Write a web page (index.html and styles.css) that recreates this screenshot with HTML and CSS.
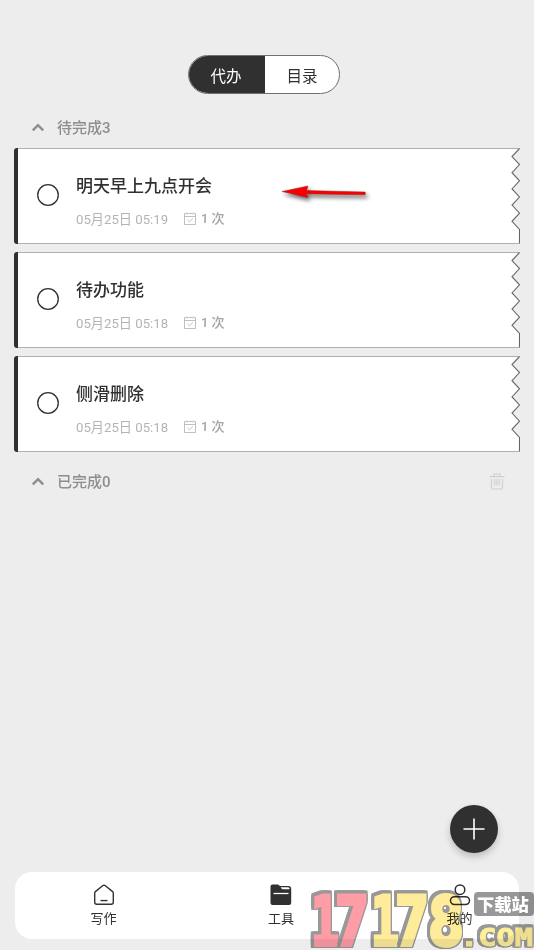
FILE: index.html
```html
<!DOCTYPE html>
<html lang="zh-CN">
<head>
<meta charset="utf-8">
<title>代办</title>
<link rel="stylesheet" href="styles.css">
</head>
<body>
<svg class="defs" width="0" height="0">
  <symbol id="edge" viewBox="0 0 506 97">
    <path d="M3 .5H505.500L498 8.500L505.500 16.600L498 24.700L505.500 32.800L498 40.900L505.500 49L498 57.100L505.500 65.200L498 73.300L505.500 81.400V95.500H3Z" fill="#fff"/>
    <path d="M3 .5H505.500M505.500 95.500H3" fill="none" stroke="#b0b0b0"/>
    <path d="M505.500 .5L498 8.500L505.500 16.600L498 24.700L505.500 32.800L498 40.900L505.500 49L498 57.100L505.500 65.200L498 73.300L505.500 81.400V95.500" fill="none" stroke="#666" stroke-width="1.100"/>
    <path d="M4 0H3Q0 0 0 3V93Q0 96 3 96H4Z" fill="#303030"/>
  </symbol>
  <symbol id="ring" viewBox="0 0 22 22"><circle cx="11" cy="11" r="10.300" fill="none" stroke="#303030" stroke-width="1.300"/></symbol>
  <symbol id="cal" viewBox="0 0 12 13">
    <path d="M2.500 1.500H.5V12.500H11.500V1.500H9.500M4 1.500H8M3 .3V2.500M9 .3V2.500M.5 4.500H11.500M3.500 8L5.500 9.800L8.800 6.600" fill="none" stroke="#b8b8b8" stroke-width=".9"/>
  </symbol>
  <symbol id="up" viewBox="0 0 14 9"><path d="M1.800 7.300L7 2.200L12.200 7.300" fill="none" stroke="#8e8e8e" stroke-width="2.500"/></symbol>
</svg>
<main class="screen">
  <div class="tabs"><span class="tab active">代办</span><span class="tab">目录</span></div>
  <div class="section"><svg class="up"><use href="#up"/></svg><span>待完成3</span></div>
  <section class="list">
    <article class="card"><svg class="edge"><use href="#edge"/></svg><svg class="check"><use href="#ring"/></svg>
      <div class="body"><h2>明天早上九点开会</h2><p><span class="date">05月25日 05:19</span><svg class="cal"><use href="#cal"/></svg><b>1 次</b></p></div></article>
    <article class="card"><svg class="edge"><use href="#edge"/></svg><svg class="check"><use href="#ring"/></svg>
      <div class="body"><h2>待办功能</h2><p><span class="date">05月25日 05:18</span><svg class="cal"><use href="#cal"/></svg><b>1 次</b></p></div></article>
    <article class="card"><svg class="edge"><use href="#edge"/></svg><svg class="check"><use href="#ring"/></svg>
      <div class="body"><h2>侧滑删除</h2><p><span class="date">05月25日 05:18</span><svg class="cal"><use href="#cal"/></svg><b>1 次</b></p></div></article>
  </section>
  <div class="section done"><svg class="up"><use href="#up"/></svg><span>已完成0</span>
    <svg class="trash" viewBox="0 0 16 17" fill="none" stroke="#d0d0d0" stroke-width="1.200"><path d="M.5 3.700H15.500M5 3.500V1H11V3.500M2.500 6V14.500Q2.500 16 4 16H12Q13.500 16 13.500 14.500V6M5.700 6V12.500M8 6V12.500M10.300 6V12.500"/></svg>
  </div>
  <nav class="nav">
    <a class="item"><svg width="22" height="22" viewBox="0 0 22 22" fill="none" stroke="#333" stroke-width="1.400"><path d="M1.700 9.300Q1.700 8.300 2.400 7.600L9.600 1.700Q11 .7 12.400 1.700L19.600 7.600Q20.300 8.300 20.300 9.300V18.300Q20.300 20.300 18.300 20.300H3.700Q1.700 20.300 1.700 18.300Z"/><path d="M7.500 16.600H14.500"/></svg><span>写作</span></a>
    <a class="item"><svg width="22" height="22" viewBox="0 0 22 22"><path d="M.5 2.500Q.5.500 2.500.500H8L10 2H18.500Q21.200 2 21.200 5V19Q21.200 21 19 21H2.700Q.5 21 .5 19Z" fill="#303030"/><path d="M10.500 3.300H18Q19.700 3.300 19.700 5.300H12.200Z" fill="#fff"/><path d="M3.500 9.500H18.500" stroke="#fff" stroke-width="1.300"/></svg><span>工具</span></a>
    <a class="item"><svg width="22" height="22" viewBox="0 0 22 22" fill="none" stroke="#303030" stroke-width="1.500"><circle cx="11" cy="5.700" r="4.800"/><rect x="1.500" y="12.700" width="19" height="7.800" rx="3.900"/></svg><span>我的</span></a>
  </nav>
</main>
<div class="fab"><svg width="22" height="22" viewBox="0 0 22 22"><path d="M11 .5V21.500M.5 11H21.500" stroke="#fff" stroke-width="1.600"/></svg></div>
<svg class="arrow" viewBox="0 0 100 30"><path d="M12 12.500L38 7L36.500 11.500L54 12L95 13Q96 14.500 95 15.800L74 15.500L36 14.800L38 18.500Z" fill="#f80000" stroke="#9b2020" stroke-width=".5"/></svg>
<svg class="mark" viewBox="0 0 234 70">
  <g class="digits">
    <text class="red" x="11" y="65" textLength="28" lengthAdjust="spacingAndGlyphs">1</text>
    <text class="red" x="35" y="65" textLength="34" lengthAdjust="spacingAndGlyphs">7</text>
    <text x="71" y="65" textLength="28" lengthAdjust="spacingAndGlyphs">1</text>
    <text x="95" y="65" textLength="34" lengthAdjust="spacingAndGlyphs">7</text>
    <text x="128" y="65" textLength="36" lengthAdjust="spacingAndGlyphs">8</text>
  </g>
  <text class="com" x="160" y="66" textLength="73" lengthAdjust="spacingAndGlyphs">.COM</text>
  <rect x="174" y="12" width="60" height="24" rx="4" fill="#989898"/>
</svg>
<span class="site">下载站</span>
</body>
</html>
```
FILE: styles.css
```css
* { box-sizing: border-box; }
body { margin: 0; width: 534px; height: 950px; overflow: hidden; position: relative; background: #ededed; color: #303030; font-family: Roboto, "Noto Sans CJK SC", sans-serif; }
svg { display: block; flex: none; }
.defs { position: absolute; }
.screen { height: 950px; padding: 55px 14px 11px; display: flex; flex-direction: column; }
.tabs { display: flex; align-self: center; width: 152px; height: 39px; margin-right: 6px; border: 1px solid #707070; border-radius: 20px; overflow: hidden; background: #fff; }
.tab { width: 74px; display: flex; align-items: center; justify-content: center; font-size: 15.5px; }
.active { width: 76px; padding-right: 2px; background: #303030; color: #fff; }
.section { display: flex; align-items: center; height: 22px; margin-top: 22px; padding: 0 14px 0 17px; color: #8e8e8e; font-size: 15px; font-weight: 500; }
.section span { margin-top: -2px; }
.up { width: 14px; height: 9px; margin-right: 12px; }
.list { display: flex; flex-direction: column; gap: 8px; margin-top: 10px; }
.card { position: relative; height: 96px; display: flex; align-items: flex-start; padding: 24px 0 0 23px; }
.edge { position: absolute; left: 0; top: 0; width: 506px; height: 97px; }
.check { position: relative; width: 22px; height: 22px; margin-top: 12px; }
.body { position: relative; margin-left: 17px; }
.body h2 { margin: 0; font-size: 17px; line-height: 28px; font-weight: 500; }
.body p { display: flex; align-items: center; height: 20px; margin: 9px 0 0; font-size: 13.2px; color: #b4b4b4; }
.date { width: 108px; margin-top: -2px; white-space: nowrap; }
.cal { width: 12px; height: 13px; margin: -2px 5px 0 0; }
.body b { margin-top: -4px; font-size: 13px; font-weight: 500; color: #a4a4a4; }
.done { margin-top: 18px; }
.trash { width: 16px; height: 17px; margin-left: auto; margin-right: 1px; }
.nav { display: grid; grid-template-columns: 177px 178px 1fr; margin: auto 1px 0; height: 67px; background: #fff; border-radius: 17px; }
.item { display: flex; flex-direction: column; align-items: center; padding-top: 12px; font-size: 13px; }
.item span { line-height: 20px; margin-top: 3px; }
.item:nth-child(3) { width: 179px; }
.fab { position: absolute; left: 450px; top: 805px; width: 48px; height: 48px; border-radius: 50%; background: #303030; display: flex; align-items: center; justify-content: center; box-shadow: 0 4px 7px #0003; }
.arrow { position: absolute; left: 270px; top: 179px; width: 100px; height: 30px; filter: drop-shadow(2px 3px 2px #0009); }
.mark { position: absolute; left: 300px; top: 880px; width: 234px; height: 70px; mix-blend-mode: multiply; }
.digits text { font: bold 67px "DejaVu Sans Mono"; fill: #ffec9a; stroke: #ffec9a; stroke-width: 4px; stroke-linejoin: miter; filter: drop-shadow(1.5px 0 0 #989898) drop-shadow(-3px 0 0 #989898) drop-shadow(0 1.5px 0 #989898) drop-shadow(0 -3px 0 #989898); }
.digits .red { fill: #ff9da6; stroke: #ff9da6; }
.com { font: bold 25px "DejaVu Sans Mono"; fill: #fff09a; stroke: #fff09a; stroke-width: 1px; filter: drop-shadow(1.5px 0 0 #989898) drop-shadow(-2.5px 0 0 #989898) drop-shadow(0 1.5px 0 #989898) drop-shadow(0 -2.5px 0 #989898); }
.site { position: absolute; left: 477px; top: 892px; font: 900 17.3px/24px "Noto Sans CJK SC", sans-serif; color: #fff; white-space: nowrap; }
```
